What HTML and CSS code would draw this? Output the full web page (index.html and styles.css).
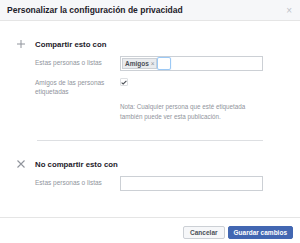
FILE: index.html
```html
<!DOCTYPE html>
<html lang="es">
<head>
    <meta charset="UTF-8">
    <title>Personalizar la configuración de privacidad</title>
    <link rel="stylesheet" href="styles.css">
</head>
<body>
    <div class="dialog">
        <div class="dialog-header">
            <span class="dialog-title">Personalizar la configuración de privacidad</span>
            <span class="dialog-close">×</span>
        </div>

        <div class="dialog-body">
            <div class="section">
                <div class="section-head">
                    <svg class="section-icon" width="8" height="8" viewBox="0 0 8 8">
                        <path d="M4 0V8M0 4H8" stroke="#90949c" stroke-width="1"/>
                    </svg>
                    <span class="section-title">Compartir esto con</span>
                </div>
                <div class="row">
                    <span class="label">Estas personas o listas</span>
                    <div class="input">
                        <span class="token">Amigos <span class="token-x">×</span></span>
                        <span class="caret-box"></span>
                    </div>
                </div>
                <div class="row row-check">
                    <span class="label">Amigos de las personas etiquetadas</span>
                    <span class="checkbox">
                        <svg width="6" height="5" viewBox="0 0 6 5">
                            <path d="M0.6 2.6L2.2 4L5.4 0.8" stroke="#4b4f56" stroke-width="1.1" fill="none"/>
                        </svg>
                    </span>
                </div>
                <p class="note">Nota: Cualquier persona que esté etiquetada también puede ver esta publicación.</p>
            </div>

            <hr class="divider">

            <div class="section">
                <div class="section-head">
                    <svg class="section-icon" width="8" height="8" viewBox="0 0 8 8">
                        <path d="M0.5 0.5L7.5 7.5M7.5 0.5L0.5 7.5" stroke="#90949c" stroke-width="1.1"/>
                    </svg>
                    <span class="section-title">No compartir esto con</span>
                </div>
                <div class="row">
                    <span class="label">Estas personas o listas</span>
                    <div class="input"></div>
                </div>
            </div>
        </div>

        <div class="dialog-footer">
            <button class="btn">Cancelar</button>
            <button class="btn btn-primary">Guardar cambios</button>
        </div>
    </div>
</body>
</html>
```

FILE: styles.css
```css
body {
    margin: 0;
    font-family: "Liberation Sans", Arial, sans-serif;
    background-color: #fff;
    color: #1d2129;
}

.dialog {
    width: 300px;
    height: 243px;
    display: flex;
    flex-direction: column;
}

.dialog-header {
    height: 20px;
    background-color: #f6f7f9;
    border-bottom: 1px solid #e5e5e5;
    display: flex;
    align-items: center;
    justify-content: space-between;
    padding: 0 8px 0 7px;
}

.dialog-title {
    font-size: 8.5px;
    font-weight: bold;
}

.dialog-close {
    font-size: 10px;
    color: #bec2c9;
}

.dialog-body {
    flex: 1;
    padding: 17px 37px 0 17px;
}

.section-head {
    display: flex;
    align-items: center;
    height: 12px;
}

.section-icon {
    margin-right: 10px;
}

.section-title {
    font-size: 7.8px;
    font-weight: bold;
}

.row {
    display: flex;
    align-items: flex-start;
    margin-top: 6px;
    padding-left: 18px;
}

.row-check {
    margin-top: 7px;
}

.label {
    width: 85px;
    font-size: 6.5px;
    line-height: 9px;
    color: #90949c;
}

.row .label:first-child {
    padding-top: 2px;
}

.row-check .label:first-child {
    padding-top: 0;
}

.input {
    flex: 1;
    height: 15px;
    border: 1px solid #ccd0d5;
    box-sizing: border-box;
    display: flex;
    align-items: center;
    padding-left: 1px;
}

.token {
    background-color: #e9ebee;
    border: 1px solid #ccd0d5;
    font-size: 6.5px;
    font-weight: bold;
    color: #4b4f56;
    padding: 0 2px;
    line-height: 9px;
}

.token-x {
    font-weight: normal;
    color: #90949c;
}

.caret-box {
    width: 14px;
    height: 13px;
    border: 1px solid #9cc9f5;
    border-radius: 2px;
    box-sizing: border-box;
    box-shadow: 0 0 1px #9cc9f5;
}

.checkbox {
    width: 6px;
    height: 6px;
    border: 1px solid #dddfe2;
    border-radius: 1px;
    display: flex;
    align-items: center;
    justify-content: center;
}

.note {
    margin: 6px 0 0 103px;
    width: 133px;
    font-size: 6.3px;
    line-height: 10px;
    color: #90949c;
}

.divider {
    border: 0;
    border-top: 1px solid #dddfe2;
    margin: 18px 0 17px 20px;
}

.dialog-footer {
    border-top: 1px solid #e5e5e5;
    display: flex;
    justify-content: flex-end;
    gap: 3px;
    padding: 8px 7px 4px 0;
}

.btn {
    font-family: inherit;
    font-size: 6.5px;
    font-weight: bold;
    height: 13px;
    padding: 0 6px;
    border: 1px solid #ccd0d5;
    border-radius: 2px;
    background-color: #f6f7f9;
    color: #4b4f56;
}

.btn-primary {
    background-color: #4267b2;
    border-color: #4267b2;
    color: #fff;
    padding: 0 5px;
}
```
